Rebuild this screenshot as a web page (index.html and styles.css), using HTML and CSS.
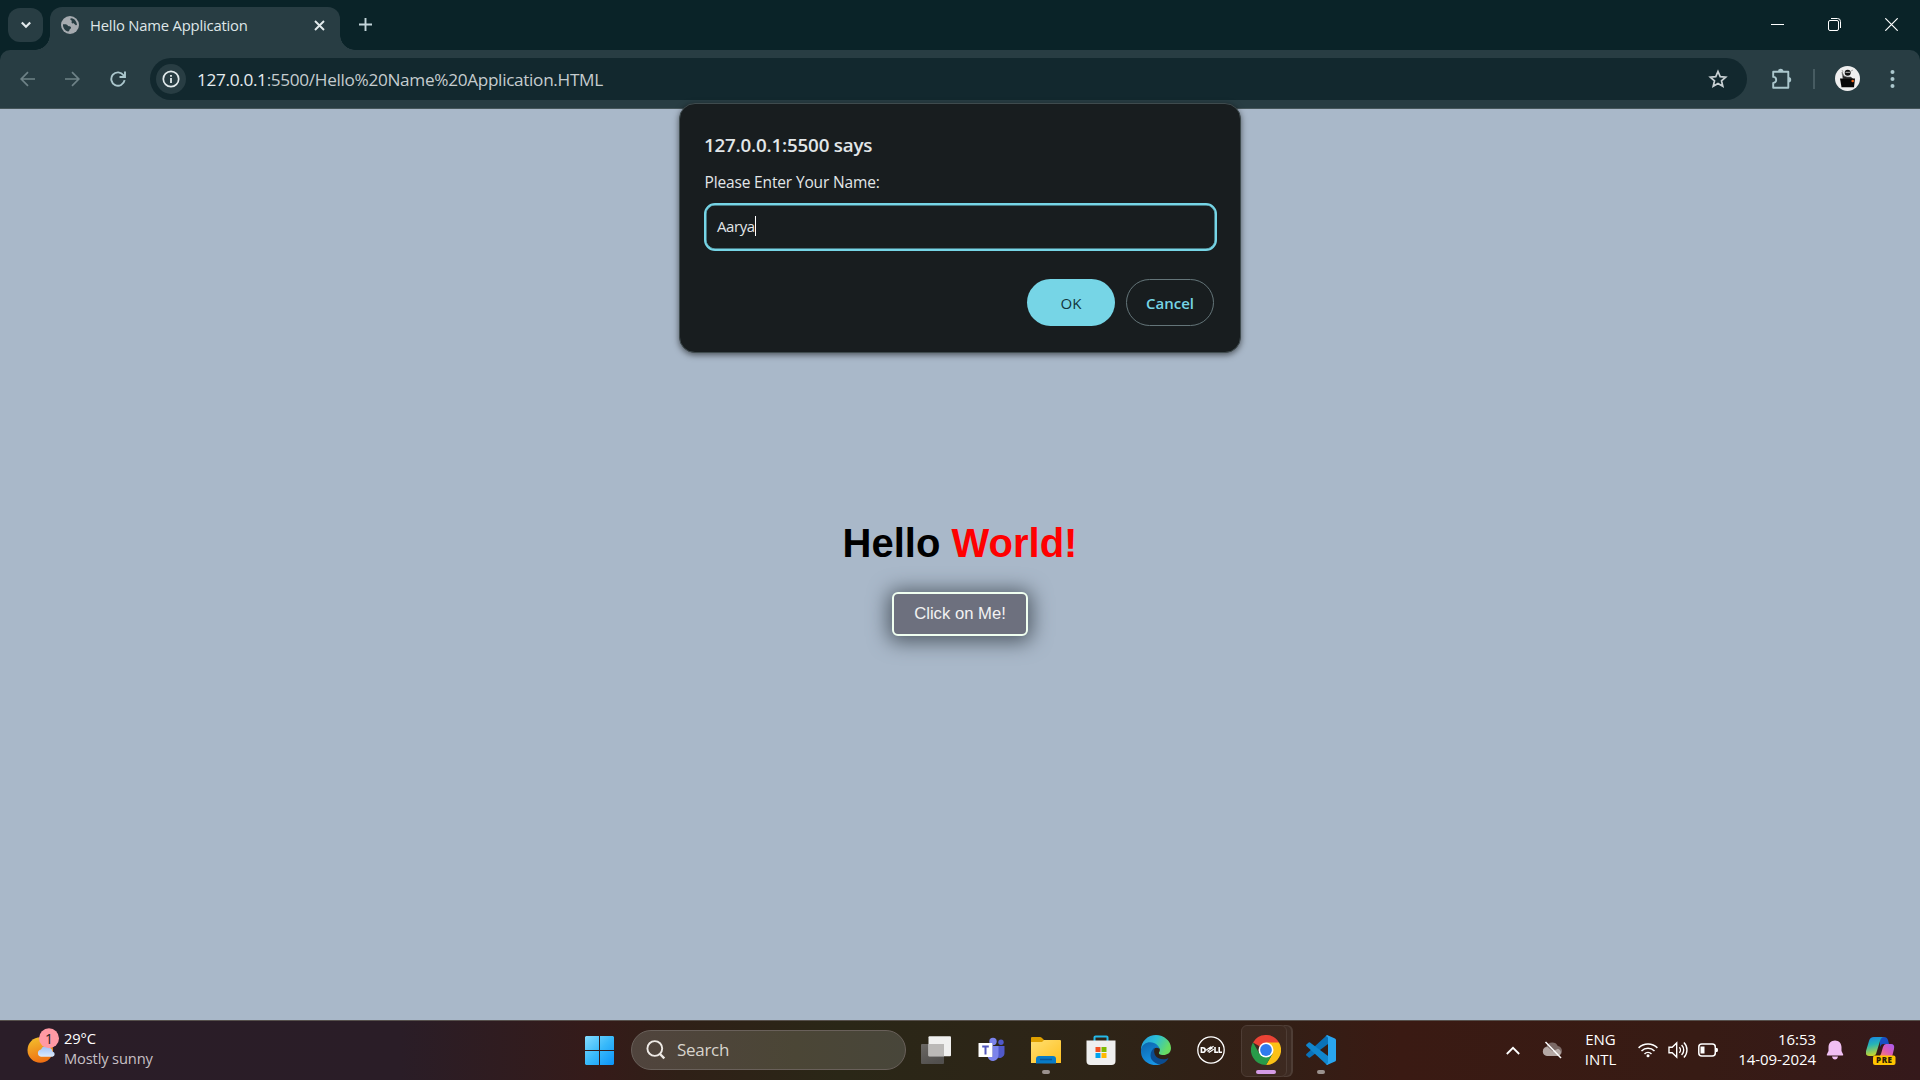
FILE: index.html
```html
<!DOCTYPE html>
<html lang="en">
<head>
<meta charset="utf-8">
<title>Hello Name Application</title>
<link rel="stylesheet" href="styles.css">
</head>
<body>
<div class="screen">
  <header class="tabstrip">
    <button class="tab-search" aria-label="Search tabs"><svg width="12" height="8" viewBox="0 0 12 8"><path d="M1.8 1.5 6 5.7l4.200-4.200" fill="none" stroke="#e2eaec" stroke-width="2.200"/></svg></button>
    <div class="tab">
      <svg class="globe" width="18" height="18" viewBox="0 0 18 18"><circle cx="9" cy="9" r="9" fill="#a6abb0"/><path d="M10.500 2.200C13.500 2.500 15.800 5.500 16 8.800c-1 .8-1.700 0-2.500-.9-.9-.8-2-.2-2.700-1-.8-.9.6-1.700-.2-2.300-.7-.6-1.700-.9-1.100-2.100zM2 8.200c1.300.2 2.700-.2 4 .6 1 .7.700 1.500 1.900 1.500 1.300 0 2.400.6 2.100 1.700-.2 1-1.400.9-1.500 2-.1.900-.8 1.500-1.700 1.500C3.800 14.500 1.700 11.500 2 8.200z" fill="#283d43"/></svg>
      <span class="tab-title">Hello Name Application</span>
      <svg width="11" height="11" viewBox="0 0 11 11"><path d="m1 1 9 9M10 1l-9 9" stroke="#e2eaec" stroke-width="1.900"/></svg>
    </div>
    <button class="new-tab" aria-label="New tab"><svg width="13" height="13" viewBox="0 0 13 13"><path d="M6.500 0v13M0 6.500h13" stroke="#c3d5da" stroke-width="1.900"/></svg></button>
    <div class="window-controls">
      <svg width="13" height="13" viewBox="0 0 13 13"><path d="M0 6.500h13" stroke="#fff"/></svg>
      <svg width="13" height="13" viewBox="0 0 13 13" fill="none" stroke="#fff"><path d="M3 .5h6.500a3 3 0 0 1 3 3V10"/><rect x=".5" y="2.500" width="10" height="10" rx="1.500"/></svg>
      <svg width="13" height="13" viewBox="0 0 13 13"><path d="m.3.300 12.400 12.400M12.700.3.300 12.700" stroke="#fff" stroke-width="1.200"/></svg>
    </div>
  </header>

  <nav class="toolbar">
    <svg class="nav-icon dim" width="16" height="16" viewBox="0 0 16 16"><path d="M15 8H1.500M8 1.200 1.200 8 8 14.800"/></svg>
    <svg class="nav-icon dim" width="16" height="16" viewBox="0 0 16 16"><path d="M1 8h13.500M8 1.200 14.800 8 8 14.800"/></svg>
    <svg class="nav-icon" width="16" height="16" viewBox="0 0 16 16"><path d="M14.600 9.200A6.700 6.700 0 1 1 13.500 4.200L14.800 6M15 .5V6H9.500"/></svg>
    <div class="omnibox">
      <span class="site-info"><svg width="18" height="18" viewBox="0 0 18 18"><circle cx="9" cy="9" r="7.700" fill="none" stroke="#e2eaec" stroke-width="1.700"/><path d="M9 8v5M9 4.900v1.900" stroke="#e2eaec" stroke-width="1.800"/></svg></span>
      <span class="url"><b>127.0.0.1</b>:5500/Hello%20Name%20Application.HTML</span>
      <svg class="star" width="20" height="20" viewBox="0 0 20 20"><path d="m10 2.500 2.200 5.100 5.500.5-4.200 3.700 1.300 5.500-4.800-2.900-4.800 2.900 1.300-5.500-4.200-3.700 5.500-.5z" fill="none" stroke="#c8d0d3" stroke-width="1.700"/></svg>
    </div>
    <svg class="puzzle" width="22" height="22" viewBox="0 0 22 22"><path d="M2.200 3.700H17.300v16H2.200v-4.800a3 3 0 0 0 0-6z" fill="none" stroke="#abc7cd" stroke-width="1.900" stroke-linejoin="round"/><path d="M7 3.500a2.700 2.700 0 0 1 5.400 0zM17.500 9a2.700 2.700 0 0 1 0 5.400z" fill="#abc7cd"/></svg>
    <span class="divider"></span>
    <svg class="avatar" width="25" height="25" viewBox="0 0 25 25"><circle cx="12.500" cy="12.500" r="12.500" fill="#efefef"/><circle cx="12.700" cy="6.800" r="3" fill="#111"/><path d="M10.500 6.300h4.500" stroke="#bbb" stroke-width="1"/><path d="m7 6 2 4 3 1h4l2 2H8zM18 4l-2 1M7 4l1 2" fill="#222" stroke="#777" stroke-width=".6"/><path d="M5 12.500h15l-1 8.700H6.500z" fill="#080808"/><circle cx="17.700" cy="15" r="1.300" fill="#f26419"/></svg>
    <svg class="dots" width="5" height="20" viewBox="0 0 5 20" fill="#abc7cd"><circle cx="2.500" cy="3" r="2"/><circle cx="2.500" cy="10" r="2"/><circle cx="2.500" cy="17" r="2"/></svg>
  </nav>

  <main class="page">
    <h1 class="greeting">Hello <span class="accent">World!</span></h1>
    <button class="click-me">Click on Me!</button>
  </main>

  <section class="dialog" role="dialog">
    <h2 class="dialog-title">127.0.0.1:5500 says</h2>
    <p class="dialog-message">Please Enter Your Name:</p>
    <div class="field"><span class="field-text">Aarya</span><span class="caret"></span></div>
    <div class="actions"><button class="btn primary">OK</button><button class="btn outline">Cancel</button></div>
  </section>

  <footer class="taskbar">
    <div class="weather">
      <svg width="34" height="36" viewBox="0 0 34 36">
        <defs><linearGradient id="sun" x1=".3" y1="0" x2=".6" y2="1"><stop stop-color="#f3bd2c"/><stop offset="1" stop-color="#ee6c12"/></linearGradient><linearGradient id="cloud" x2="0" y2="1"><stop stop-color="#9cc0f8"/><stop offset="1" stop-color="#dbe9fb"/></linearGradient></defs>
        <circle cx="13.300" cy="22" r="12.800" fill="url(#sun)"/>
        <path d="M14 28.700a3.700 3.700 0 0 1 0-7.300 5.500 5.500 0 0 1 9.500-1.200 4.500 4.500 0 0 1 2 3.200 2.700 2.700 0 0 1 0 5.300z" fill="url(#cloud)"/>
        <circle cx="22" cy="10.300" r="10" fill="#ff99a4"/><text x="22" y="15.500" class="badge-text">1</text>
      </svg>
      <div class="weather-text"><div>29°C</div><div class="weather-note">Mostly sunny</div></div>
    </div>

    <div class="apps">
      <div class="app"><svg width="29" height="29" viewBox="0 0 29 29"><defs><linearGradient id="win" x2="1" y2="1"><stop stop-color="#84dcff"/><stop offset=".5" stop-color="#38b9fa"/><stop offset="1" stop-color="#0b93f8"/></linearGradient></defs><path d="M1 0h13v14H0V1zM15 0h13l1 1v13H15zM0 15h14v14H1l-1-1zM15 15h14v13l-1 1H15z" fill="url(#win)"/></svg></div>
      <div class="search"><svg width="20" height="20" viewBox="0 0 20 20" fill="none" stroke="#eeeae6"><circle cx="8.800" cy="8.500" r="7.400" stroke-width="1.900"/><path d="m14 14 4.300 4.300" stroke-width="2.400"/></svg><span>Search</span></div>
      <div class="app"><svg width="30" height="30" viewBox="0 0 30 30"><defs><linearGradient id="tvb" x2=".5" y2="1"><stop stop-color="#6b6864"/><stop offset="1" stop-color="#52504e"/></linearGradient></defs><rect y="9" width="23" height="20" rx="1" fill="url(#tvb)"/><rect x="7.500" y="1.300" width="22.500" height="20" rx="1" fill="#f0f0ef"/><path d="M7.500 9H23v12.300H7.500z" fill="#bbb9b7"/></svg></div>
      <div class="app"><svg width="30" height="30" viewBox="0 0 30 30"><circle cx="17" cy="6.500" r="3.700" fill="#7b83eb"/><circle cx="25" cy="7.300" r="2.700" fill="#5059c9"/><path d="M20 11h8.500v6.500a5 5 0 0 1-8.500 4z" fill="#5059c9"/><path d="M10 11h12.500v9a5.500 5.500 0 0 1-11 1z" fill="#7b83eb"/><path d="M16 8h1v14h-5z" fill="#4a50b5"/><rect x="2.500" y="8" width="14" height="14" rx=".5" fill="#fff"/><path d="M6.200 10.600h6.600v1.900H10.500v7H8.500v-7H6.200z" fill="#5257bd"/></svg></div>
      <div class="app running"><svg width="30" height="30" viewBox="0 0 30 30"><defs><linearGradient id="folder" x2="1" y2="1"><stop stop-color="#ffdf72"/><stop offset="1" stop-color="#ffc01f"/></linearGradient></defs><path d="M0 9V3q0-1 1-1h8q1 0 2 1l2 2h8v4z" fill="#dfa000"/><path d="M0 7h11l2-2h16q1 0 1 1v22H0z" fill="url(#folder)"/><path d="M5 28.500V24q0-3 3-3h14q3 0 3 3v4.500z" fill="#087bc6"/><path d="M9 24.500h12" stroke="#06579b" stroke-width="1.500"/></svg></div>
      <div class="app"><svg width="30" height="30" viewBox="0 0 30 30"><path d="M8.500 7V2.300Q8.500 1.500 9.500 1.500h11q1 0 1 .8V7" fill="none" stroke="#25b9e9" stroke-width="2"/><path d="M.5 5.500h29V26q0 4-4 4h-21q-4 0-4-4z" fill="#efefef"/><path d="M9.500 12h5v5h-5z" fill="#f25022"/><path d="M15.500 12h5v5h-5z" fill="#7fba00"/><path d="M9.500 18h5v5h-5z" fill="#00a4ef"/><path d="M15.500 18h5v5h-5z" fill="#ffb900"/></svg></div>
      <div class="app"><svg width="30" height="30" viewBox="0 0 30 30"><defs><linearGradient id="e1" x2="1" y2=".4"><stop stop-color="#2497dc"/><stop offset=".5" stop-color="#2bbfd7"/><stop offset="1" stop-color="#68dc62"/></linearGradient><linearGradient id="e2" x2=".4" y2="1"><stop stop-color="#0c64ac"/><stop offset="1" stop-color="#1795e6"/></linearGradient></defs><path d="M0 15C0 6 7 0 15 0s15 6 15 13c0 5-4 7-7.500 7-4 0-5-1.500-4.500-2.500 1.500-2 1-4-.5-5.500C13 7 3 8 0 15z" fill="url(#e1)"/><path d="M0 15C1 8 8 6 13 8c3 1 5 3.500 5.500 6-2.500-2.500-7-1-7 4 0 6 5 11 9.500 10.500C13 33-1 28 0 15z" fill="url(#e2)"/><path d="M14 12.500c-4 2-6 8-3 12.500 3 4 8 5.500 12 3 2-1.200 3.500-3 4.500-5-4 2.500-11 1.500-13.500-3-1.300-2.500-1-5.500 0-7.500z" fill="#0b4c90"/></svg></div>
      <div class="app"><svg width="30" height="30" viewBox="0 0 30 30"><circle cx="15" cy="15" r="13.200" fill="none" stroke="#fff" stroke-width="1.300"/><g fill="none" stroke="#fff" stroke-width="1.600"><path d="M5.400 12.700v4.600h1.300c3.300 0 3.300-4.600 0-4.600zM19 12v5.300h3M23.200 12v5.300h2.800"/><path d="m10 15.300 4.800-3.400 1.400 1.100-4.400 3.100 1.500 1.200 4.400-3.100M13.200 14.200l4.400-3" stroke-width="1.100"/></g></svg></div>
      <div class="app active"><svg width="30" height="30" viewBox="0 0 30 30"><path d="M15 15 2 7.500A15 15 0 0 1 28 7.500z" fill="#ea4335"/><path d="M15 7.500h13A15 15 0 0 1 15 30l6.500-11.200z" fill="#fbc116"/><path d="M2 7.500A15 15 0 0 0 15 30l6.500-11.200h-13z" fill="#289b49"/><circle cx="15" cy="15" r="7.500" fill="#fff"/><circle cx="15" cy="15" r="5.900" fill="#2f7bed"/></svg></div>
      <div class="app running"><svg width="30" height="30" viewBox="0 0 30 30"><path d="M22 0v9L4 22.500q-.7.500-1.300 0L.4 20.400q-.6-.7 0-1.300L20 1z" fill="#0a72b9"/><path d="M22 30v-9L4 7.500q-.7-.5-1.300 0L.4 9.600q-.6.700 0 1.300L20 29z" fill="#1186cd"/><path d="M21.500.200 29 3.500q1 .5 1 1.500v20q0 1-1 1.500l-7.500 3.300q-1 .3-2-1 2.500.5 2.500-1.800V3q0-2-2.500-1.700 1-1.400 2-1.100z" fill="#29a5ef"/></svg></div>
    </div>

    <div class="tray">
      <svg class="t40" width="14" height="9" viewBox="0 0 14 9"><path d="m.8 8 6.200-6.200L13.200 8" fill="none" stroke="#fff" stroke-width="1.800"/></svg>
      <svg class="t40" width="22" height="20" viewBox="0 0 22 20"><path d="M5 15.500a4.600 4.600 0 0 1-.5-9A6.200 6.200 0 0 1 15.800 6a5 5 0 0 1 1.200 9.500z" fill="#7b6965"/><path d="M5 16a4.500 4.500 0 0 1 .6-9l5 4.200 5.400-2.500a4 4 0 0 1 1 7.300z" fill="#b5a9a5"/><path d="m3.500 2 15.500 16" stroke="#fff" stroke-width="1.500"/></svg>
      <div class="lang">ENG<br>INTL</div>
      <svg width="20" height="16" viewBox="0 0 20 16" fill="none" stroke="#fff" stroke-width="1.500"><path d="M.6 5.900a13.300 13.300 0 0 1 18.800 0M3.500 9a9.200 9.200 0 0 1 13 0M6.500 12a5 5 0 0 1 7 0"/><circle cx="10" cy="13.700" r="1.500" fill="#fff" stroke="none"/></svg>
      <svg width="20" height="18" viewBox="0 0 20 18" fill="none" stroke="#fff" stroke-width="1.400"><path d="M1 6.300h3.200L8.700 2v14l-4.500-4.300H1zM11.300 6.200a4 4 0 0 1 0 5.600M13.600 3.900a7.200 7.200 0 0 1 0 10.200M15.900 1.600a10.500 10.500 0 0 1 0 14.800"/></svg>
      <svg width="20" height="14" viewBox="0 0 20 14"><rect x=".8" y="1" width="16.500" height="12" rx="3" fill="none" stroke="#fff" stroke-width="1.500"/><path d="M2.500 3.500h4v7h-4zM18 5h1q1 0 1 2t-1 2h-1z" fill="#fff"/></svg>
      <div class="clock">16:53<br>14-09-2024</div>
      <svg class="bell" width="18" height="20" viewBox="0 0 18 20"><path d="M9 .6c3.800 0 6.500 2.800 6.500 6.500v4l1.700 3.400q.3.900-.7.900h-15q-1 0-.7-.9l1.700-3.400v-4C2.500 3.400 5.200.600 9 .600zM6 16.500h6q-.6 3-3 3t-3-3z" fill="#f0bff3"/></svg>
      <svg class="copilot" width="30" height="30" viewBox="0 0 30 30"><defs><linearGradient id="c1" x2=".2" y2="1"><stop stop-color="#1682e6"/><stop offset=".45" stop-color="#27b4b5"/><stop offset="1" stop-color="#c6d52d"/></linearGradient><linearGradient id="c2" x1="1" x2="0" y2="1"><stop stop-color="#a45cf5"/><stop offset=".5" stop-color="#dc5bb4"/><stop offset="1" stop-color="#ff8b5d"/></linearGradient></defs><path d="M14 2h4q3 0 4 3l1 4h-6q-2 0-3 3z" fill="#174fc5"/><path d="M8 2h10q-3 0-4 4l-4 13q-1 2-3 2H3q-4 0-3-5L3 6q1-4 5-4z" fill="url(#c1)"/><path d="M20 9h5q4 0 3 5l-2 8H12q2 0 3-3l2-7q1-3 3-3z" fill="url(#c2)"/><rect x="7" y="20.500" width="22.500" height="9.500" rx="2" fill="#ffc400"/><text x="18.300" y="28" class="pre">PRE</text></svg>
    </div>
  </footer>
</div>
</body>
</html>
```
FILE: styles.css
```css
* { box-sizing: border-box; }
body { margin: 0; font-family: "Open Sans", "Noto Sans", sans-serif; }
button { font: inherit; border: 0; padding: 0; }
svg { display: block; flex: none; }
.screen { position: relative; display: flex; flex-direction: column; width: 1920px; height: 1080px; overflow: hidden; background: #0a2328; }

/* tab strip */
.tabstrip { display: flex; height: 50px; padding: 7px 22px 0 8px; background: #0a2328; }
.tab-search { display: grid; place-items: center; width: 35px; height: 34px; margin: 1px 7px 0 0; border-radius: 12px; background: #283d43; }
.tab { position: relative; display: flex; align-items: center; width: 290px; height: 43px; padding: 0 15px 7px 11px; border-radius: 12px 12px 0 0; background: #283d43; }
.tab::before, .tab::after { content: ""; position: absolute; bottom: 0; width: 15px; height: 15px; }
.tab::before { left: -15px; background: radial-gradient(circle at 0 0, transparent 14.500px, #283d43 15px); }
.tab::after { right: -15px; background: radial-gradient(circle at 100% 0, transparent 14.500px, #283d43 15px); }
.tab-title { flex: 1; margin-left: 11px; color: #dfe6e8; font-size: 14.800px; letter-spacing: -0.190px; white-space: nowrap; }
.new-tab { display: grid; place-items: center; width: 35px; height: 35px; margin-left: 8px; background: none; }
.window-controls { display: flex; gap: 44px; margin-left: auto; padding-top: 11px; }

/* toolbar */
.toolbar { display: flex; align-items: center; height: 59px; padding: 0 25px 1px 20px; border-radius: 10px 10px 0 0; border-bottom: 1px solid #46565a; background: #283d43; }
.nav-icon { margin-right: 28px; fill: none; stroke: #abc7cd; stroke-width: 1.900px; }
.nav-icon.dim { stroke: #6e8287; stroke-width: 1.700px; }
.nav-icon:nth-child(3) { margin: 0 24px 0 2px; }
.omnibox { display: flex; align-items: center; width: 1597px; height: 42px; padding: 0 19px 0 6px; border-radius: 21px; background: #12282e; }
.site-info { display: grid; place-items: center; width: 30px; height: 30px; border-radius: 50%; background: #283d43; }
.url { flex: 1; margin-left: 11px; padding-top: 1px; color: #c5ccce; font-size: 17.200px; letter-spacing: -0.320px; white-space: nowrap; }
.url b { color: #e6ecee; font-weight: 400; }
.puzzle { margin-left: 24px; }
.divider { width: 2px; height: 20px; margin: 0 20px 0 20px; background: #475c62; }
.dots { margin-left: auto; }

/* page */
.page { display: flex; flex-direction: column; align-items: center; height: 911px; padding-top: 411px; background: #a9b8c9; font-family: "Liberation Sans", Arial, sans-serif; }
.greeting { margin: 0; font-size: 40px; line-height: 46px; font-weight: 700; color: #000; }
.accent { color: #f00; }
.click-me { width: 136px; height: 44px; margin-top: 26px; padding-bottom: 1px; border: 2px solid #f0fff0; border-radius: 6px; background: #6d707e; color: #f2f2f2; font-size: 16.670px; box-shadow: 0 2px 20px 4px #535d68; }

/* prompt */
.dialog { position: absolute; left: 679px; top: 103px; width: 562px; height: 249.500px; padding: 27px 25px 0 25px; border: 1px solid #3f4b4e; border-radius: 16px; background: #181d1f; box-shadow: 0 2px 6px rgba(0, 0, 0, .55); color: #e2e6e8; }
.dialog-title { margin: 0 0 0 -1px; font-size: 18.800px; line-height: 28px; font-weight: 600; letter-spacing: -0.200px; }
.dialog-message { margin: 12px 0 10px -0.500px; font-size: 15.500px; line-height: 22px; letter-spacing: -0.150px; }
.field { display: flex; align-items: center; height: 47.500px; width: 512.500px; margin-left: -1px; padding: 0 11px 2px; border: 2.500px solid #76d5e6; border-radius: 11px; font-size: 15px; letter-spacing: -0.400px; box-shadow: inset 0 0 0 .5px #76d5e6; }
.caret { width: 1px; height: 20px; background: #fff; }
.actions { display: flex; justify-content: flex-end; gap: 11px; margin: 28.500px 1px 0 0; }
.btn { width: 88px; height: 47px; border-radius: 24px; font-size: 15px; font-weight: 600; }
.primary { background: #76d5e6; color: #12363d; font-weight: 500; }
.outline { border: 1px solid #647579; background: none; color: #76d5e6; }

/* taskbar */
.taskbar { display: flex; align-items: center; height: 60px; padding-bottom: 1px; border-top: 1px solid #56504c; background: linear-gradient(90deg, #2a1d28 0, #2a1d27 400px, #351b19 600px, #2f2017 680px, #2a2717 840px, #2e2417 1100px, #331e15 1290px, #3a1a13 1400px, #371b14 1700px, #35191b 1920px); color: #fff; font-size: 14.500px; line-height: 20px; }
.weather { display: flex; gap: 3px; width: 572px; padding: 0 0 4px 27px; }
.weather-text { font-size: 14.700px; letter-spacing: -0.150px; }
.weather-note { color: #c7c0c5; }
.badge-text { fill: #221c20; font-size: 14px; text-anchor: middle; }
.apps { display: flex; align-items: center; }
.app { position: relative; display: grid; place-items: center; width: 55px; height: 50px; }
.search { display: flex; align-items: center; gap: 11px; width: 275px; height: 40px; margin: 0 2px 0 4px; padding: 0 14px 0; border: 1px solid #69605a; border-radius: 20px; background: linear-gradient(90deg, #50443d, #4b4636 60%, #48463a); color: #d8d4cd; font-size: 17px; letter-spacing: -0.300px; }
.running::after, .active::after { content: ""; position: absolute; left: 50%; bottom: 1px; width: 8px; height: 4px; margin-left: -4px; border-radius: 2px; background: #9b928e; }
.active::after { width: 20px; margin-left: -10px; background: #d59ce6; }
.active::before { content: ""; position: absolute; left: 3px; top: 0; width: 44px; height: 50px; border: 1px solid #4e3d35; border-radius: 6px; background: #ffffff0d; box-shadow: 5px 0 0 -1px #3d2b23, 6px 0 0 #4e3d35; }
.active svg { position: relative; }
.tray { display: flex; align-items: center; margin-left: auto; padding-right: 24px; }
.tray > svg { margin-right: 10px; }
.tray > .t40:first-child { margin-right: 22px; }
.tray > .t40:nth-child(2) { margin-right: 9px; }
.lang { width: 54px; margin-right: 11px; padding: 0 0 2px 1px; text-align: center; font-size: 15px; }
.clock { width: 88px; padding-bottom: 2px; text-align: right; font-size: 15px; letter-spacing: -0.050px; }
.tray > .bell { margin: 0 22px 0 10px; }
.tray > .copilot { margin: 0; }
.pre { fill: #2b1c05; font: 800 8px "Open Sans", sans-serif; text-anchor: middle; letter-spacing: .5px; }
```
